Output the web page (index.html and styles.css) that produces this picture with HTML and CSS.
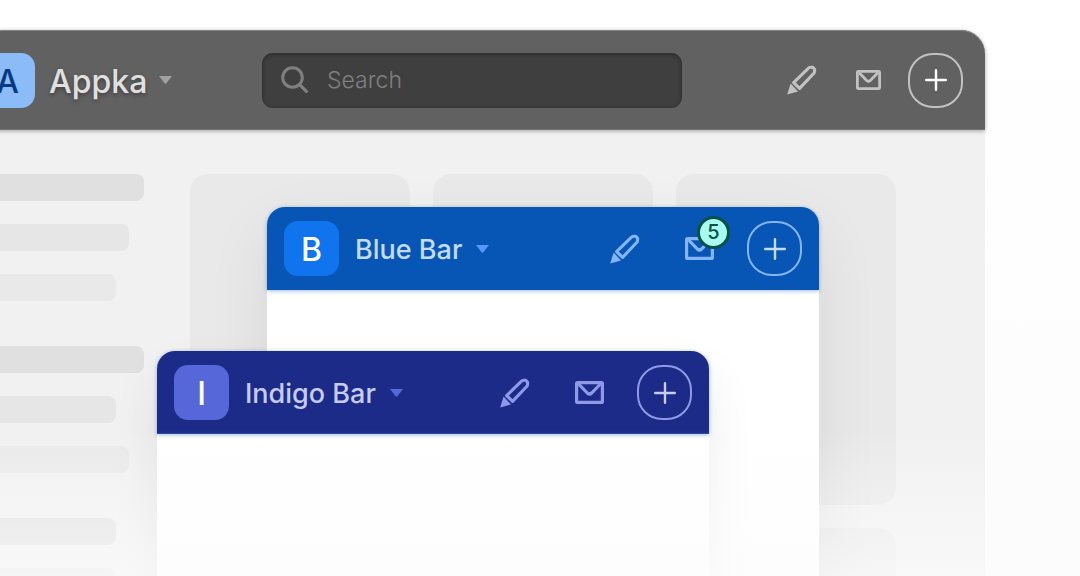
FILE: index.html
```html
<!DOCTYPE html>
<html lang="en">
<head>
    <meta charset="UTF-8">
    <meta name="viewport" content="width=device-width, initial-scale=1.0">
    <title>Appka</title>
    <link rel="stylesheet" href="styles.css">
</head>
<body>
    <!-- Shared icons -->
    <svg class="sprite" aria-hidden="true">
        <symbol id="icon-pencil" viewBox="0 0 30 30">
            <path d="M6.6 17.6 21 3.6Q22.2 2.2 23.8 2.2H25.8L27.6 4.2V6.2Q27.6 7.6 26.4 8.8L12.6 23.4Z" fill="none" stroke="currentColor" stroke-width="3.1" stroke-linejoin="round"/>
            <path d="M.2 29.6 3.6 18.4 11 26.5Z" fill="currentColor"/>
        </symbol>
        <symbol id="icon-mail" viewBox="0 0 29 23">
            <rect x="1.6" y="1.6" width="25.8" height="19.8" rx="1" fill="none" stroke="currentColor" stroke-width="3.2"/>
            <path d="M3.6 3 12.4 12Q14.5 14 16.6 12L25.4 3" fill="none" stroke="currentColor" stroke-width="3.2"/>
        </symbol>
        <symbol id="icon-plus" viewBox="0 0 22 22">
            <path d="M11 1.2V20.8M1.2 11H20.8" fill="none" stroke="currentColor" stroke-width="2.4" stroke-linecap="round"/>
        </symbol>
        <symbol id="icon-caret" viewBox="0 0 13 8">
            <path d="M0 0H13L7.2 7.4Q6.5 8.2 5.8 7.4Z" fill="currentColor"/>
        </symbol>
        <symbol id="icon-search" viewBox="0 0 28 28">
            <circle cx="11.5" cy="11.5" r="9.8" fill="none" stroke="currentColor" stroke-width="3"/>
            <path d="M18.8 18.8 25.4 25.4" fill="none" stroke="currentColor" stroke-width="3.2" stroke-linecap="round"/>
        </symbol>
    </svg>

    <div class="desktop">
        <div class="window main-window">
            <header class="bar bar-gray">
                <button class="brand" type="button">
                    <span class="avatar">A</span>
                    <span class="name">Appka</span>
                    <svg class="caret"><use href="#icon-caret"/></svg>
                </button>
                <label class="search">
                    <svg class="search-icon" aria-hidden="true"><use href="#icon-search"/></svg>
                    <input type="search" placeholder="Search" aria-label="Search">
                </label>
                <div class="tools">
                    <button class="tool" type="button" aria-label="Edit"><svg class="pencil"><use href="#icon-pencil"/></svg></button>
                    <button class="tool" type="button" aria-label="Messages"><svg class="mail"><use href="#icon-mail"/></svg></button>
                    <button class="tool add" type="button" aria-label="Add"><svg class="plus"><use href="#icon-plus"/></svg></button>
                </div>
            </header>
            <div class="content">
                <div class="sidebar">
                    <div class="group">
                        <div class="line title w-l"></div>
                        <div class="line w-m"></div>
                        <div class="line light w-s"></div>
                    </div>
                    <div class="group">
                        <div class="line title w-l"></div>
                        <div class="line w-s"></div>
                        <div class="line light w-m"></div>
                    </div>
                    <div class="group">
                        <div class="line title w-s"></div>
                        <div class="line w-s"></div>
                    </div>
                </div>
                <div class="cards">
                    <div class="card"></div>
                    <div class="card"></div>
                    <div class="card"></div>
                    <div class="card"></div>
                    <div class="card"></div>
                    <div class="card"></div>
                </div>
            </div>
        </div>

        <div class="window floating blue-window">
            <header class="bar bar-blue">
                <button class="brand" type="button">
                    <span class="avatar">B</span>
                    <span class="name">Blue Bar</span>
                    <svg class="caret"><use href="#icon-caret"/></svg>
                </button>
                <div class="tools">
                    <button class="tool" type="button" aria-label="Edit"><svg class="pencil"><use href="#icon-pencil"/></svg></button>
                    <button class="tool" type="button" aria-label="Messages">
                        <svg class="mail"><use href="#icon-mail"/></svg>
                        <span class="badge">5</span>
                    </button>
                    <button class="tool add" type="button" aria-label="Add"><svg class="plus"><use href="#icon-plus"/></svg></button>
                </div>
            </header>
        </div>

        <div class="window floating indigo-window">
            <header class="bar bar-indigo">
                <button class="brand" type="button">
                    <span class="avatar">I</span>
                    <span class="name">Indigo Bar</span>
                    <svg class="caret"><use href="#icon-caret"/></svg>
                </button>
                <div class="tools">
                    <button class="tool" type="button" aria-label="Edit"><svg class="pencil"><use href="#icon-pencil"/></svg></button>
                    <button class="tool" type="button" aria-label="Messages"><svg class="mail"><use href="#icon-mail"/></svg></button>
                    <button class="tool add" type="button" aria-label="Add"><svg class="plus"><use href="#icon-plus"/></svg></button>
                </div>
            </header>
        </div>

        <div class="fade"></div>
    </div>
</body>
</html>
```
FILE: styles.css
```css
* {
  box-sizing: border-box;
  margin: 0;
  padding: 0;
}

body {
  font-family: Inter, 'Liberation Sans', sans-serif;
  background-color: #fcfcfc;
}

button {
  border: none;
  background: none;
  font-family: inherit;
  color: inherit;
  cursor: pointer;
}

.sprite {
  position: absolute;
  width: 0;
  height: 0;
}

.desktop {
  position: relative;
  height: 100vh;
  padding-top: 30px;
  overflow: hidden;
  background: linear-gradient(#ffffff, #fcfcfc);
}

/* Windows */
.main-window {
  margin-left: -20px;
  margin-right: 95px;
  background-color: #f1f1f1;
  border-radius: 24px 24px 0 0;
}

.floating {
  position: absolute;
  width: 552px;
  height: 500px;
  background-color: white;
  border-radius: 18px 18px 0 0;
}

.blue-window {
  left: 267px;
  top: 207px;
  box-shadow: 0 24px 64px rgba(0, 0, 0, 0.08);
}

.indigo-window {
  left: 157px;
  top: 351px;
  box-shadow: 0 24px 48px rgba(0, 0, 0, 0.08);
}

/* Bars */
.bar {
  display: flex;
  align-items: center;
  height: 83px;
  padding: 0 17px;
  border-radius: 18px 18px 0 0;
}

.bar-gray {
  height: 100px;
  padding: 0 22px 0 0;
  border-radius: 24px 24px 0 0;
  background-color: #616161;
  color: #c2c2c2;
  box-shadow: inset 0 1px 0 #858585, inset 0 -1px 0 #747474, 0 1px 4px rgba(0, 0, 0, 0.35);
}

.bar-blue {
  background-color: #0755b5;
  color: #83b5f7;
  box-shadow: 0 1px 4px rgba(7, 85, 181, 0.4);
}

.bar-indigo {
  background-color: #1c2b88;
  color: #8e9ae8;
  box-shadow: inset 0 -1px 0 #3344a0, 0 1px 4px rgba(7, 85, 181, 0.4);
}

.brand {
  display: flex;
  align-items: center;
}

.bar-gray .brand {
  flex: none;
  width: 282px;
}

.avatar {
  width: 55px;
  height: 55px;
  margin-right: 16px;
  border-radius: 14px;
  font-size: 32px;
  font-weight: 500;
  line-height: 57px;
  color: white;
}

.bar-gray .avatar {
  margin-right: 14px;
  background-color: #8cbcf8;
  color: #053a82;
}

.bar-blue .avatar {
  background-color: #1174ef;
}

.bar-indigo .avatar {
  background-color: #5668d9;
}

.name {
  margin-right: 14px;
  padding-top: 3px;
  font-size: 27px;
  font-weight: 500;
  line-height: 40px;
}

.bar-gray .name {
  margin-right: 12px;
  font-size: 32px;
  color: #e0e0e0;
  text-shadow: 0 2px 4px rgba(0, 0, 0, 0.35);
}

.bar-blue .name {
  color: #c3dbfc;
}

.bar-indigo .name {
  color: #c6ccf5;
}

.caret {
  width: 13px;
  height: 8px;
}

.bar-gray .caret {
  color: #a0a0a0;
}

.bar-blue .caret {
  color: #5399f7;
}

.bar-indigo .caret {
  color: #5668d9;
}

/* Search */
.search {
  display: flex;
  align-items: center;
  flex: 0 1 420px;
  min-width: 0;
  height: 55px;
  padding: 0 19px;
  gap: 18px;
  border-radius: 11px;
  background-color: #3f3f3f;
  color: #808080;
  box-shadow: inset 0 1px 4px rgba(0, 0, 0, 0.4);
}

.search-icon {
  flex: none;
  width: 28px;
  height: 28px;
}

.search input {
  flex: 1;
  width: 100%;
  min-width: 0;
  border: none;
  outline: none;
  background: none;
  font-family: inherit;
  font-size: 23px;
  font-weight: 300;
  color: #e0e0e0;
}

.search input::placeholder {
  color: #808080;
}

/* Tools */
.tools {
  display: flex;
  margin-left: auto;
  gap: 20px;
}

.bar-gray .tools {
  gap: 12px;
}

.tool {
  position: relative;
  display: flex;
  align-items: center;
  justify-content: center;
  width: 55px;
  height: 55px;
}

.add {
  border: 2px solid currentColor;
  border-radius: 25px;
}

.pencil {
  width: 30px;
  height: 30px;
}

.mail {
  width: 29px;
  height: 23px;
}

.bar-gray .mail {
  width: 25px;
  height: 20px;
}

.plus {
  width: 22px;
  height: 22px;
  color: white;
}

.bar-blue .plus {
  color: #c3dbfc;
}

.bar-indigo .plus {
  color: #c6ccf5;
}

.badge {
  position: absolute;
  top: -5px;
  right: -3px;
  width: 33px;
  height: 33px;
  border: 3px solid #045148;
  border-radius: 50%;
  background-color: #a8fbef;
  font-size: 20px;
  font-weight: 500;
  line-height: 27px;
  text-align: center;
  color: #045148;
}

/* Placeholder content */
.content {
  display: flex;
  gap: 44px;
  padding: 44px 89px 0 0;
}

.sidebar {
  flex: 0 0 166px;
  display: flex;
  flex-direction: column;
  gap: 45px;
}

.group {
  display: flex;
  flex-direction: column;
  gap: 23px;
}

.line {
  height: 27px;
  border-radius: 8px;
  background-color: #e6e6e6;
}

.line.title {
  background-color: #e0e0e0;
}

.line.light {
  background-color: #e9e9e9;
}

.w-l {
  width: 164px;
}

.w-m {
  width: 149px;
}

.w-s {
  width: 136px;
}

.cards {
  flex: 1;
  display: grid;
  grid-template-columns: repeat(3, 1fr);
  grid-auto-rows: 331px;
  gap: 23px;
}

.card {
  border-radius: 18px;
  background-color: #e9e9e9;
}

/* Fades the bottom of the scene into the page */
.fade {
  position: absolute;
  left: 0;
  right: 0;
  bottom: 0;
  height: 146px;
  background: linear-gradient(rgba(252, 252, 252, 0), rgba(252, 252, 252, 0.7));
  pointer-events: none;
}
```
